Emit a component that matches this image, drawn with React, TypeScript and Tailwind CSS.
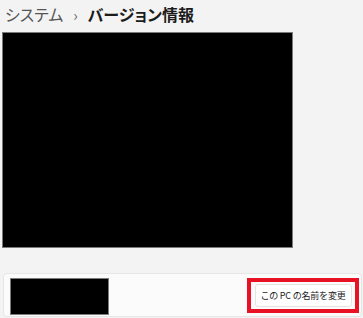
export default function App() {
  return (
    <div className="h-[318px] w-full overflow-hidden bg-[#f3f3f3] pl-[2px] font-['Noto_Sans_CJK_JP',sans-serif]">
      {/* breadcrumb title */}
      <h1 className="flex h-[28px] items-center pl-[3px] text-[16px] leading-none [font-feature-settings:'palt']">
        <span className="text-[#555555]">システム</span>
        <span className="mx-[10px] text-[15px] text-[#6b6b6b]">›</span>
        <span className="font-bold text-[#1b1b1b]">バージョン情報</span>
      </h1>

      <div className="mt-[4px] h-[216px] w-[291px] border border-[#7a7a7a] bg-black" />

      <div className="mt-[25px] ml-[1px] mr-[1px] flex h-[44px] items-start justify-between rounded-[4px] border border-[#e6e6e6] bg-[#fbfbfb] pl-[6px] pr-[2px] pt-[4px]">
        <div className="h-[37px] w-[99px] border border-[#7a7a7a] bg-black" />
        <div className="flex h-[35px] w-[112px] items-center justify-center border-4 border-[#e81224]">
          <button className="flex h-[23px] w-[97px] items-center justify-center whitespace-nowrap rounded-[3px] border border-[#e3e3e3] bg-white text-[9px] leading-none tracking-[-0.2px] text-[#1b1b1b]">
            この PC の名前を変更
          </button>
        </div>
      </div>
    </div>
  );
}
